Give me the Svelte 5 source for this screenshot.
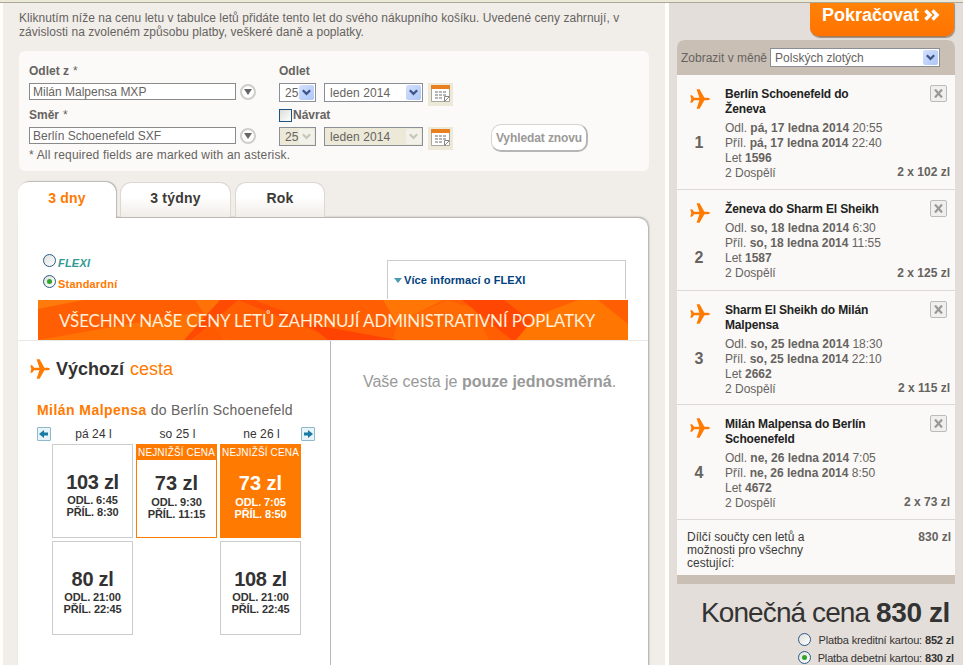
<script>
    const tabs = ['3 dny', '3 týdny', 'Rok'];

    const days = ['pá 24 l', 'so 25 l', 'ne 26 l'];

    const fares = [
        { price: '103 zl', departs: '6:45', arrives: '8:30' },
        { price: '73 zl', departs: '9:30', arrives: '11:15', lowest: true },
        {
            price: '73 zl',
            departs: '7:05',
            arrives: '8:50',
            lowest: true,
            selected: true,
        },
        { price: '80 zl', departs: '21:00', arrives: '22:45' },
        null,
        { price: '108 zl', departs: '21:00', arrives: '22:45' },
    ];

    const flights = [
        {
            title: ['Berlín Schoenefeld do', 'Ženeva'],
            date: 'pá, 17 ledna 2014',
            departs: '20:55',
            arrives: '22:40',
            number: '1596',
            price: '2 x 102 zl',
        },
        {
            title: ['Ženeva do Sharm El Sheikh'],
            date: 'so, 18 ledna 2014',
            departs: '6:30',
            arrives: '11:55',
            number: '1587',
            price: '2 x 125 zl',
        },
        {
            title: ['Sharm El Sheikh do Milán', 'Malpensa'],
            date: 'so, 25 ledna 2014',
            departs: '18:30',
            arrives: '22:10',
            number: '2662',
            price: '2 x 115 zl',
        },
        {
            title: ['Milán Malpensa do Berlín', 'Schoenefeld'],
            date: 'ne, 26 ledna 2014',
            departs: '7:05',
            arrives: '8:50',
            number: '4672',
            price: '2 x 73 zl',
        },
    ];

    let activeTab = $state('3 dny');
</script>

{#snippet plane()}
    <svg class="plane" viewBox="0 0 20 20">
        <path
            d="M0.300 6.200h1.800l2 2.500h5.300L6.600 0.200h3l4.800 8.500h3.400q2.200 0.300 2.200 1.300t-2.200 1.300h-3.400L9.600 19.800h-3l2.800-8.500H4.100l-2 2.500H0.300l1-3.800z"
        />
    </svg>
{/snippet}

{#snippet dateRow(disabled)}
    <div class="dates">
        {@render select('25', 'day', disabled)}
        {@render select('leden 2014', 'month', disabled)}
        <span class="calendar">
            <svg width="20" height="18" viewBox="0 0 20 18">
                <path d="M0.500 0.500h18v16h-18z" fill="#fff" stroke="#aaa69e" />
                <path d="M0 0h19v4H0z" fill="#e98020" />
                <path
                    d="M4 6h3v2H4zM8 6h3v2H8zM12 6h3v2h-3zM4 9h3v2H4zM8 9h3v2H8zM12 9h3v2h-3zM4 12h3v2H4zM8 12h3v2H8z"
                    fill="#b5b5b5"
                />
                <path d="M13.500 11.500h5l-5 5z" fill="#fff" stroke="#888" />
            </svg>
        </span>
    </div>
{/snippet}

{#snippet select(value, size, disabled)}
    <span class="select {size}" class:disabled>
        <span class="value">{value}</span>
        <span class="drop">
            <svg width="9" height="7" viewBox="0 0 9 7">
                <path d="M0.800 1.200l3.700 3.700 3.700-3.700" />
            </svg>
        </span>
    </span>
{/snippet}

<div class="page">
    <div class="top-line"></div>
    <div class="columns">
        <main>
            <p class="intro">
                Kliknutím níže na cenu letu v tabulce letů přidáte tento let do
                svého nákupního košíku. Uvedené ceny zahrnují, v<br />závislosti
                na zvoleném způsobu platby, veškeré daně a poplatky.
            </p>

            <form class="search">
                <div class="route">
                    <div class="label"><b>Odlet z</b> *</div>
                    <div class="field">
                        <span class="input">Milán Malpensa MXP</span>
                        <span class="opener"></span>
                    </div>
                    <div class="label"><b>Směr</b> *</div>
                    <div class="field">
                        <span class="input">Berlín Schoenefeld SXF</span>
                        <span class="opener"></span>
                    </div>
                    <div class="note">
                        * All required fields are marked with an asterisk.
                    </div>
                </div>
                <div class="when">
                    <div class="label"><b>Odlet</b></div>
                    {@render dateRow(false)}
                    <div class="label">
                        <span class="checkbox"></span><b>Návrat</b>
                    </div>
                    {@render dateRow(true)}
                </div>
                <button type="button" class="again">Vyhledat znovu</button>
            </form>

            <div class="tabs">
                {#each tabs as tab}
                    <button
                        class="tab"
                        class:active={tab === activeTab}
                        onclick={() => (activeTab = tab)}>{tab}</button
                    >
                {/each}
            </div>

            <section class="results">
                <div class="options">
                    <div class="fares-kind">
                        <div class="kind flexi">
                            <span class="radio"></span><span>FLEXI</span>
                        </div>
                        <div class="kind standard">
                            <span class="radio checked"></span><span
                                >Standardní</span
                            >
                        </div>
                    </div>
                    <div class="more"><i></i>Více informací o FLEXI</div>
                </div>
                <div class="banner">
                    <svg viewBox="0 0 590 40" width="590" height="40">
                        <path d="M0 0h590v40H0z" fill="#ff5f02" />
                        <path d="M0 0h45L0 9z" fill="#ff7a0c" />
                        <path d="M0 40l160-28 28 28z" fill="#ff7204" />
                        <path d="M157 0h40l-30 15z" fill="#ff7208" />
                        <path d="M197 0l-42 40h32l-14-18z" fill="#ff5a02" />
                        <path d="M182 0h18l-46 40h-8z" fill="#ff4a04" />
                        <path d="M200 0h16l104 40h-20z" fill="#ff4e04" />
                        <path d="M345 0h60l-46 23z" fill="#ff7606" />
                        <path d="M359 23l50-23 26 8 16 32H355z" fill="#ff6a04" />
                        <path d="M424 0h42l52 40h-44z" fill="#ff4703" />
                        <path d="M478 40l20-24 42-16h20l30 24v16z" fill="#ff7602" />
                        <path d="M270 24l90 16h-70z" fill="#ff4303" />
                    </svg>
                    <span
                        >VŠECHNY NAŠE CENY LETŮ ZAHRNUJÍ ADMINISTRATIVNÍ
                        POPLATKY</span
                    >
                </div>

                <div class="trips">
                    <div class="outbound">
                        <h2>{@render plane()}<b>Výchozí</b> <em>cesta</em></h2>
                        <h3><b>Milán Malpensa</b> do Berlín Schoenefeld</h3>
                        <div class="days">
                            <button class="step" aria-label="Zpět">
                                <svg width="12" height="12" viewBox="0 0 12 12">
                                    <path d="M1 6l5-4v2.500h4v3H6V10z" />
                                </svg>
                            </button>
                            {#each days as day}
                                <span class="day">{day}</span>
                            {/each}
                            <button class="step next" aria-label="Vpřed">
                                <svg width="12" height="12" viewBox="0 0 12 12">
                                    <path d="M11 6L6 2v2.500H2v3h4V10z" />
                                </svg>
                            </button>
                        </div>
                        <div class="grid">
                            {#each fares as fare}
                                {#if fare}
                                    <div
                                        class="fare"
                                        class:lowest={fare.lowest}
                                        class:selected={fare.selected}
                                    >
                                        <div class="badge">
                                            {fare.lowest ? 'NEJNIŽŠÍ CENA' : ''}
                                        </div>
                                        <div class="amount">{fare.price}</div>
                                        <div class="time">
                                            ODL. {fare.departs}
                                        </div>
                                        <div class="time">
                                            PŘÍL. {fare.arrives}
                                        </div>
                                    </div>
                                {:else}
                                    <div></div>
                                {/if}
                            {/each}
                        </div>
                    </div>
                    <div class="return">
                        Vaše cesta je <b>pouze jednosměrná</b>.
                    </div>
                </div>
            </section>
        </main>

        <aside>
            <button class="continue">
                Pokračovat
                <svg width="16" height="12" viewBox="0 0 16 12">
                    <path
                        d="M1.500 1.500l4.500 4.500-4.500 4.500M8.500 1.500l4.500 4.500-4.500 4.500"
                    />
                </svg>
            </button>
            <div class="basket">
                <div class="currency">
                    <span>Zobrazit v měně</span>
                    {@render select('Polských zlotých', 'wide', false)}
                </div>
                {#each flights as flight, i}
                    <div class="flight" class:single={flight.title.length === 1}>
                        <div class="marker">
                            {@render plane()}
                            <span>{i + 1}</span>
                        </div>
                        <div class="details">
                            <h4>
                                {#each flight.title as line}
                                    <div>{line}</div>
                                {/each}
                            </h4>
                            <div>Odl. <b>{flight.date}</b> {flight.departs}</div>
                            <div>Příl. <b>{flight.date}</b> {flight.arrives}</div>
                            <div>Let <b>{flight.number}</b></div>
                            <div>2 Dospělí</div>
                        </div>
                        <div class="side">
                            <button class="remove" aria-label="Odebrat">
                                <svg width="9" height="9" viewBox="0 0 9 9">
                                    <path d="M1 0.500l7 8M8 0.500l-7 8" />
                                </svg>
                            </button>
                            <b>{flight.price}</b>
                        </div>
                    </div>
                {/each}
                <div class="subtotal">
                    <span
                        >Dílčí součty cen letů a<br />možnosti pro všechny<br
                        />cestující:</span
                    >
                    <b>830 zl</b>
                </div>
            </div>
            <div class="total">Konečná cena <b>830 zl</b></div>
            <div class="payment">
                <span class="radio"></span>
                <span>Platba kreditní kartou: <b>852 zl</b></span>
            </div>
            <div class="payment">
                <span class="radio checked"></span>
                <span>Platba debetní kartou: <b>830 zl</b></span>
            </div>
        </aside>
    </div>
</div>

<style>
    :global(body) {
        overflow: hidden;
    }

    .page {
        --orange: #ff7a00;
        --text: #666360;
        display: flex;
        flex-direction: column;
        width: 963px;
        height: 665px;
        overflow: hidden;
        background: #fffefb;
        color: var(--text);
        font-family: 'Liberation Sans', Arial, sans-serif;
        font-size: 12px;
        line-height: 14px;
        white-space: nowrap;
    }

    .page * {
        box-sizing: border-box;
    }

    button {
        margin: 0;
        padding: 0;
        font-family: inherit;
    }

    h2,
    h3,
    h4,
    p {
        margin: 0;
        font-weight: normal;
    }

    .top-line {
        flex: none;
        height: 3px;
        background: #ece9d8;
        border-bottom: 1px solid #aca899;
    }

    .columns {
        display: flex;
        height: 662px;
    }

    main {
        width: 662px;
        margin-left: 3px;
        padding: 8px 0 0 15px;
        background: #f1eeea;
    }

    .intro {
        height: 40px;
        margin-left: 1px;
        letter-spacing: 0.04px;
    }

    .search {
        display: flex;
        width: 630px;
        height: 120px;
        margin-left: 1px;
        padding: 13px 0 0 9px;
        border-radius: 6px;
        background: #fbfaf8;
    }

    .route {
        width: 251px;
        padding-left: 1px;
    }

    .label {
        display: flex;
        align-items: center;
        gap: 4px;
        height: 14px;
        margin-bottom: 5px;
    }

    .field {
        display: flex;
        align-items: center;
        gap: 4px;
        height: 17px;
        margin-bottom: 8px;
    }

    .input {
        width: 207px;
        height: 17px;
        padding-left: 3px;
        border: 1px solid #8a8a8a;
        background: #fff;
        line-height: 16px;
    }

    .opener {
        display: flex;
        align-items: center;
        justify-content: center;
        width: 16px;
        height: 16px;
        border: 2px solid #d0cecb;
        border-radius: 50%;
        background: #fff;
    }

    .opener::after {
        content: '';
        border: 4px solid transparent;
        border-top: 6px solid #666;
        border-bottom: 0;
    }

    .note {
        margin-top: -4px;
        letter-spacing: 0.17px;
    }

    .when {
        width: 212px;
    }

    .when .label {
        gap: 1px;
    }

    .checkbox {
        width: 13px;
        height: 13px;
        border: 1px solid #1c5180;
        background: linear-gradient(135deg, #dcdcd7, #fff);
    }

    .dates {
        display: flex;
        height: 25px;
    }

    .select {
        display: flex;
        justify-content: space-between;
        height: 19px;
        padding: 1px;
        border: 1px solid #8a8f96;
        background: #fff;
        line-height: 16px;
    }

    .day.select {
        width: 37px;
        margin-right: 8px;
    }

    .select.month {
        width: 99px;
        margin-right: 5px;
    }

    .select.wide {
        width: 170px;
    }

    .value {
        padding-left: 4px;
        letter-spacing: 0.1px;
    }

    .wide .value {
        padding-left: 3px;
        letter-spacing: 0;
    }

    .drop {
        display: flex;
        align-items: center;
        justify-content: center;
        width: 15px;
        border-radius: 2px;
        background: linear-gradient(135deg, #d4e0fd, #aec6f7);
    }

    .drop path {
        fill: none;
        stroke: #3e5687;
        stroke-width: 2.2;
    }

    .disabled {
        background: #ece9d8;
    }

    .disabled .drop {
        background: #f3f2ea;
    }

    .disabled .drop path {
        stroke: #c9c7ba;
    }

    .calendar {
        width: 25px;
        height: 23px;
        padding: 2px 0 0 3px;
        background: #ece9d8;
    }

    .again {
        width: 97px;
        height: 28px;
        margin-top: 60px;
        border: 2px solid #d6d4d2;
        border-top-width: 1px;
        border-left-width: 1px;
        border-right-color: #b8b6b4;
        border-bottom-color: #b8b6b4;
        border-radius: 10px;
        background: #fff;
        color: #9b9997;
        font-size: 12px;
        font-weight: bold;
        letter-spacing: -0.1px;
    }

    .tabs {
        display: flex;
        gap: 4px;
        height: 35px;
        margin-top: 11px;
    }

    .tab {
        width: 111px;
        height: 35px;
        padding-bottom: 4px;
        border: 1px solid #dcd8d4;
        border-bottom: 0;
        border-radius: 11px 11px 0 0;
        background: linear-gradient(#fff 40%, #f0ede8);
        color: #3c3a36;
        font-size: 14px;
        font-weight: bold;
        letter-spacing: 0.2px;
    }

    .tab:last-child {
        width: 90px;
    }

    .tab.active {
        position: relative;
        width: 98px;
        height: 37px;
        padding-bottom: 6px;
        border-color: #fff;
        background: #fff;
        box-shadow: 1px -1px 1px #bbb6b2;
        color: var(--orange);
    }

    .results {
        width: 630px;
        height: 460px;
        border-top: 1px solid #bcb7b3;
        border-radius: 0 10px 0 0;
        background: #fff;
        box-shadow: 1px 0 2px #aaa5a2;
    }

    .options {
        display: flex;
        justify-content: space-between;
        height: 82px;
        padding: 36px 22px 0 25px;
    }

    .kind {
        display: flex;
        gap: 2px;
        height: 21px;
        font-size: 11px;
        font-weight: bold;
        letter-spacing: 0.2px;
    }

    .kind span:last-child {
        padding-top: 2px;
    }

    .flexi {
        color: #2f9a94;
        font-style: italic;
    }

    .standard {
        color: var(--orange);
    }

    .radio {
        display: flex;
        align-items: center;
        justify-content: center;
        flex: none;
        width: 13px;
        height: 13px;
        border: 1px solid #2c5a86;
        border-radius: 50%;
        background: linear-gradient(135deg, #dfdfda, #fff);
    }

    .radio.checked::after {
        content: '';
        width: 5px;
        height: 5px;
        border-radius: 50%;
        background: #2ca52a;
    }

    .more {
        display: flex;
        align-items: center;
        gap: 2px;
        width: 239px;
        height: 39px;
        margin-top: 6px;
        padding-left: 6px;
        border: 1px solid #ccc;
        border-bottom: 0;
        color: #00417d;
        font-size: 11px;
        font-weight: bold;
        letter-spacing: 0.1px;
    }

    .more i {
        border: 4px solid transparent;
        border-top: 5px solid #4a9cb4;
        border-bottom: 0;
    }

    .banner {
        display: grid;
        width: 590px;
        height: 40px;
        margin-left: 20px;
        align-items: center;
    }

    .banner > * {
        grid-area: 1 / 1;
    }

    .banner span {
        z-index: 1;
        padding: 2px 0 0 21px;
        color: #fff0dc;
        font-family: Lato, sans-serif;
        font-size: 17px;
        letter-spacing: -0.17px;
    }

    .trips {
        display: flex;
        height: 330px;
        border-top: 1px solid #e8e8e8;
    }

    .outbound {
        width: 313px;
        padding: 17px 0 0 12px;
        border-right: 1px solid #b8b8b8;
    }

    .plane {
        width: 20px;
        height: 20px;
        fill: var(--orange);
    }

    h2 {
        display: flex;
        align-items: center;
        gap: 6px;
        height: 21px;
        color: #333;
        font-size: 18px;
    }

    h2 em {
        color: var(--orange);
        font-style: normal;
    }

    h3 {
        margin: 24px 0 10px 7px;
        font-size: 14px;
        letter-spacing: 0.2px;
    }

    h3 b {
        color: var(--orange);
        letter-spacing: 0.45px;
    }

    .days {
        display: flex;
        gap: 1px;
        height: 17px;
        margin-left: 7px;
    }

    .days .day {
        width: 83px;
        color: #333;
        text-align: center;
        letter-spacing: 0.1px;
    }

    .step {
        width: 14px;
        height: 14px;
        border: 1px solid #8fb8ca;
        border-radius: 1px;
        background: #e8f4f8;
        line-height: 0;
    }

    .step.next {
        margin-left: -3px;
    }

    .step path {
        fill: #167aa5;
    }

    .grid {
        display: grid;
        grid-template-columns: repeat(3, 81px);
        grid-auto-rows: 94px;
        gap: 3px;
        margin-left: 22px;
    }

    .fare {
        border: 1px solid #ccc;
        color: #333;
        text-align: center;
    }

    .badge {
        height: 15px;
        font-size: 10px;
        letter-spacing: 0.15px;
        line-height: 15px;
    }

    .amount {
        margin: 10px 0 0;
        font-size: 20px;
        font-weight: bold;
        letter-spacing: -0.3px;
        line-height: 24px;
    }

    .time {
        font-size: 11px;
        font-weight: bold;
        letter-spacing: -0.1px;
        line-height: 12px;
    }

    .lowest {
        border-color: var(--orange);
    }

    .lowest .badge {
        background: var(--orange);
        color: #fff;
    }

    .lowest .amount {
        margin: 11px 0 1px;
        letter-spacing: 0;
    }

    .selected {
        background: var(--orange);
        color: #fff;
    }

    .return {
        padding: 32px 0 0 32px;
        color: #999;
        font-size: 16px;
        letter-spacing: -0.03px;
        line-height: 18px;
    }

    aside {
        display: flex;
        flex-direction: column;
        width: 294px;
        margin-left: 4px;
        padding: 0 8px;
        background: #e3ded9;
    }

    aside > * {
        flex: none;
    }

    .continue {
        display: flex;
        align-items: flex-start;
        align-self: flex-end;
        gap: 5px;
        width: 144px;
        height: 34px;
        margin-right: 1px;
        padding: 3px 0 0 12px;
        border: 0;
        border-bottom: 1px solid #a87850;
        border-radius: 0 0 9px 9px;
        background: linear-gradient(#ff8208, #ff7300);
        box-shadow: 1px 1px 1px #9b8c80;
        color: #fff;
        font-size: 18px;
        font-weight: bold;
        line-height: 18px;
    }

    .continue svg {
        margin-top: 3px;
    }

    .continue path {
        fill: none;
        stroke: #fff;
        stroke-width: 3.4;
    }

    .basket {
        width: 278px;
        margin-top: 3px;
        border-bottom: 9px solid #c9bfb5;
        border-radius: 7px 7px 0 0;
        background: #faf9f7;
    }

    .currency {
        display: flex;
        align-items: center;
        gap: 3px;
        height: 35px;
        padding-left: 4px;
        border-radius: 7px 7px 0 0;
        background: #c9bfb5;
    }

    .flight {
        display: flex;
        height: 115px;
        padding: 14px 5px 0 13px;
        border-bottom: 1px solid #dcd9d6;
    }

    .flight.single {
        height: 101px;
    }

    /* the row below a one-line title is a pixel shorter */
    .flight.single + .flight {
        height: 114px;
    }

    .flight + .flight .plane {
        margin: -1px 0 1px;
    }

    .marker {
        display: flex;
        flex-direction: column;
        width: 35px;
    }

    .marker span {
        width: 18px;
        margin-top: 27px;
        font-size: 16px;
        font-weight: bold;
        text-align: center;
    }

    .details {
        flex: 1;
        line-height: 15px;
    }

    h4 {
        margin: -2px 0 4px;
        color: #222;
        font-size: 12px;
        font-weight: bold;
        letter-spacing: -0.15px;
    }

    .side {
        display: flex;
        flex-direction: column;
        align-items: flex-end;
        justify-content: space-between;
        height: 94px;
        margin-top: -4px;
    }

    .single .side {
        height: 80px;
    }

    .remove {
        display: flex;
        align-items: center;
        justify-content: center;
        width: 17px;
        height: 17px;
        margin-right: 3px;
        border: 1px solid #bbb;
        border-radius: 2px;
        background: #f0efed;
    }

    .remove path {
        fill: none;
        stroke: #999;
        stroke-width: 2.2;
    }

    .subtotal {
        display: flex;
        justify-content: space-between;
        height: 55px;
        padding: 11px 4px 0 10px;
        line-height: 13px;
    }

    .subtotal span {
        color: #3c3a38;
    }

    .total {
        margin: 13px 5px 4px 0;
        color: #333;
        font-size: 28px;
        letter-spacing: -0.9px;
        line-height: 32px;
        text-align: right;
    }

    .total b {
        letter-spacing: -0.4px;
    }

    .payment {
        display: flex;
        justify-content: flex-end;
        gap: 7px;
        height: 18px;
        padding-right: 1px;
        color: #333;
        font-size: 11px;
        letter-spacing: -0.15px;
    }
</style>
